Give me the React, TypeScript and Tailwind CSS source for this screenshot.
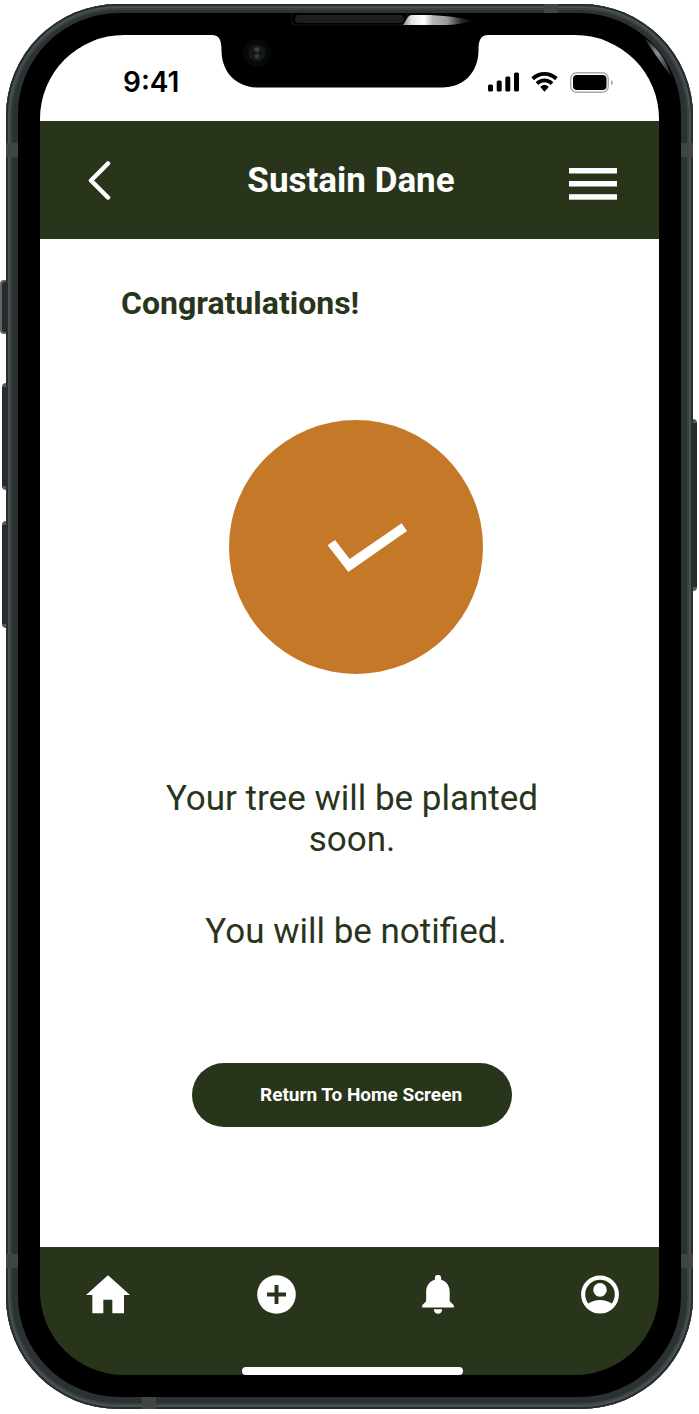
import React from "react";

function Notch() {
  return (
    <svg
      className="pointer-events-none absolute left-1/2 top-0 z-20 -translate-x-1/2"
      width="276"
      height="75"
      viewBox="0 0 276 75"
      aria-hidden="true"
    >
      <defs>
        <linearGradient id="glare" x1="0" x2="1">
          <stop offset="0" stopColor="#8a8a8a" />
          <stop offset="0.12" stopColor="#e4e4e4" />
          <stop offset="0.3" stopColor="#ffffff" />
          <stop offset="0.42" stopColor="#b5b5b5" />
          <stop offset="0.62" stopColor="#9a9a9a" />
          <stop offset="0.82" stopColor="#2a2a2a" />
          <stop offset="1" stopColor="#000000" />
        </linearGradient>
      </defs>
      <path
        d="M0 22C7 22 9.500 27 9.500 37C9.500 60 25 74.500 46 74.500H230C251 74.500 266.500 60 266.500 37C266.500 27 269 22 276 22Z"
        fill="#000"
      />
      <path d="M80 0V8Q80 12 84 12H190Q195 12 195 6V0" fill="none" stroke="#17191a" />
      <rect x="83" y="2" width="109" height="8" rx="4" fill="#1c1f20" />
      <path d="M191 12L196 4Q197 2 200 2H218C238 3 250 5 262 8C252 10 244 12 234 12Z" fill="url(#glare)" />
      <circle cx="45" cy="40" r="14" fill="#070808" />
      <circle cx="45" cy="40" r="8.500" fill="#15181a" />
      <circle cx="45" cy="36.500" r="2.500" fill="#3d4143" />
      <circle cx="45" cy="43" r="2.500" fill="#34383a" />
    </svg>
  );
}

function StatusBar() {
  return (
    <div className="flex h-[86px] items-center justify-between bg-white pl-[83px] pr-[46px] pt-2 text-black">
      <span className="font-[Inter,sans-serif] text-[28px] font-semibold leading-8">9:41</span>
      <div className="flex items-center gap-3">
        <svg width="31" height="20" viewBox="0 0 31 20" aria-label="Signal">
          <rect x="0" y="12.500" width="5" height="7" rx="1.500" />
          <rect x="8.700" y="8.500" width="5" height="11" rx="1.500" />
          <rect x="17.300" y="4.500" width="5" height="15" rx="1.500" />
          <rect x="26" y="0.500" width="5" height="19" rx="1.500" />
        </svg>
        <svg width="27" height="20" viewBox="214 215 81 60" aria-label="Wi-Fi">
          <path d="M215 231C237 210 272 210 294 231L286 240C268 222 241 222 223 240Z" />
          <path d="M228 246C243 231 266 231 281 246L273 254C262 243 247 243 236 254Z" />
          <path d="M242 260C249 252 260 252 267 260L254.500 274Z" />
        </svg>
        <svg width="43" height="21" viewBox="0 0 43 21" aria-label="Battery">
          <rect x="0.700" y="0.700" width="37.600" height="19.600" rx="6" fill="none" stroke="#a9aaa0" strokeWidth="1.400" />
          <rect x="3" y="3" width="33.500" height="15" rx="4" />
          <path d="M41 8Q43 9 43 10.500T41 13.500Z" fill="#a9aaa0" />
        </svg>
      </div>
    </div>
  );
}

function Header() {
  return (
    <header className="flex h-[118px] items-center bg-[#29351b] pl-12 pr-[42px] text-white">
      <button type="button" aria-label="Back">
        <svg width="23" height="39" viewBox="0 0 23 39" fill="none" stroke="currentColor" strokeWidth="4.500" strokeLinecap="round" strokeLinejoin="round">
          <path d="M20 2.500L3 19.500L20 36.500" />
        </svg>
      </button>
      <h1 className="flex-1 pl-[22px] pt-0.5 text-center text-[35px] font-bold leading-10">Sustain Dane</h1>
      <button type="button" aria-label="Menu" className="pt-2">
        <svg width="48" height="32" viewBox="0 0 48 32" fill="currentColor">
          <rect y="0" width="48" height="5.500" />
          <rect y="13" width="48" height="5.500" />
          <rect y="26.200" width="48" height="5.500" />
        </svg>
      </button>
    </header>
  );
}

function NavBar() {
  return (
    <nav className="flex h-32 flex-col justify-between bg-[#29351b] pt-7 text-white">
      <div className="flex items-center justify-between pl-[46px] pr-10">
        <a href="#home" aria-label="Home">
          <svg width="44" height="39" viewBox="257 136 132 117" fill="currentColor">
            <path d="M323 137L389 196H371V251H336V210H309V251H276V196H257Z" />
          </svg>
        </a>
        <a href="#add" aria-label="Add">
          <svg width="39" height="39" viewBox="0 0 39 39">
            <circle cx="19.500" cy="19.500" r="19.300" fill="currentColor" />
            <path d="M19.500 10V29M10 19.500H29" stroke="#29351b" strokeWidth="3.900" />
          </svg>
        </a>
        <a href="#notifications" aria-label="Notifications">
          <svg width="32" height="39" viewBox="216.500 135 96 117" fill="currentColor">
            <path d="M255 149V144A9.500 9.500 0 0 1 274 144V149C291 154 299.500 168 299.500 185V214L312 226V232.500H217V226L229 214V185C229 168 238 154 255 149Z" />
            <path d="M252 238H277A12.500 13.500 0 0 1 252 238Z" />
          </svg>
        </a>
        <a href="#profile" aria-label="Profile">
          <svg width="38" height="39" viewBox="692.500 134.500 115 117">
            <circle cx="750" cy="193" r="51" fill="none" stroke="currentColor" strokeWidth="12.500" />
            <circle cx="750" cy="179" r="20.500" fill="currentColor" />
            <path d="M712 222Q750 197 788 222L780 238L750 248L720 238Z" fill="currentColor" />
          </svg>
        </a>
      </div>
      <div className="flex justify-center pl-[5px]">
        <div className="h-2 w-[221px] rounded-full bg-white" />
      </div>
    </nav>
  );
}

export default function App() {
  return (
    <div className="min-h-screen bg-white px-1.5 pb-1 pt-1 font-[Roboto,sans-serif]">
      <div className="relative">
        <div className="absolute -left-1.5 top-[276px] h-[54px] w-2 rounded-l-sm border-l-2 border-y-2 border-[#62665f] bg-[#262c2d]" />
        <div className="absolute -left-1 top-[379px] h-[107px] w-2 rounded-l-sm border-y-4 border-[#565b56] bg-[#262c2d]" />
        <div className="absolute -left-1 top-[517px] h-[107px] w-2 rounded-l-sm border-y-4 border-[#565b56] bg-[#262c2d]" />
        <div className="absolute -right-1 top-[415px] h-[172px] w-2 rounded-r-sm border-y-4 border-[#565b56] bg-[#262c2d]" />

        <div className="relative overflow-hidden rounded-[112px] bg-[#2b3234] px-3 pb-3 pt-[9px] shadow-[inset_0_0_0_2px_#272e30,inset_0_0_0_4px_#4a5150,inset_0_0_0_6px_#3a4142]">
          <div className="absolute left-0 top-[139px] h-3.5 w-3 bg-[#3f4645]" />
          <div className="absolute right-0 top-[139px] h-3.5 w-3 bg-[#3f4645]" />
          <div className="absolute bottom-[141px] left-0 h-3.5 w-3 bg-[#3f4645]" />
          <div className="absolute bottom-[141px] right-0 h-3.5 w-3 bg-[#3f4645]" />
          <div className="absolute bottom-0 left-[136px] h-3 w-3.5 bg-[#3f4645]" />
          <div className="absolute right-[135px] top-0 h-[9px] w-3.5 bg-[#3f4645]" />

          <div className="relative rounded-[101px] bg-black p-[22px]">
            <Notch />
            <svg className="pointer-events-none absolute right-0 top-0" width="60" height="80" viewBox="0 0 60 80" aria-hidden="true">
              <defs>
                <linearGradient id="edge" x1="0" y1="0" x2="0.7" y2="1">
                  <stop offset="0" stopColor="#000" />
                  <stop offset="0.5" stopColor="#8b8e8f" />
                  <stop offset="1" stopColor="#25292a" />
                </linearGradient>
              </defs>
              <path d="M22 24C35 33 44 45 51 64C40 51 33 39 22 24Z" fill="url(#edge)" />
            </svg>
            <div className="flex min-h-[1340px] flex-col overflow-hidden rounded-[84px]">
              <StatusBar />
              <Header />
              <main className="flex flex-1 flex-col items-center bg-white pb-30 pl-[5px] pt-11 text-[#29351b]">
                <h2 className="self-start pl-[76px] text-[32px] font-bold leading-10">Congratulations!</h2>
                <div className="pl-2 pt-[97px]">
                  <svg width="254" height="254" viewBox="27 30 762 762" role="img" aria-label="Done">
                    <circle cx="408" cy="411" r="381" fill="#c47828" />
                    <path d="M323 406L345 390L389 447L545 340L561 363L385 486Z" fill="#fff" />
                  </svg>
                </div>
                <p className="w-[400px] pt-26 text-center text-[35px] leading-[41px]">
                  Your tree will be planted soon.
                </p>
                <p className="pl-2 pt-[51px] text-center text-[35px] leading-[41px]">You will be notified.</p>
                <button type="button" className="mt-auto h-16 w-80 rounded-full bg-[#29351b] pl-[18px] text-[19px] font-bold text-white">
                  Return To Home Screen
                </button>
              </main>
              <NavBar />
            </div>
          </div>
        </div>
      </div>
    </div>
  );
}
